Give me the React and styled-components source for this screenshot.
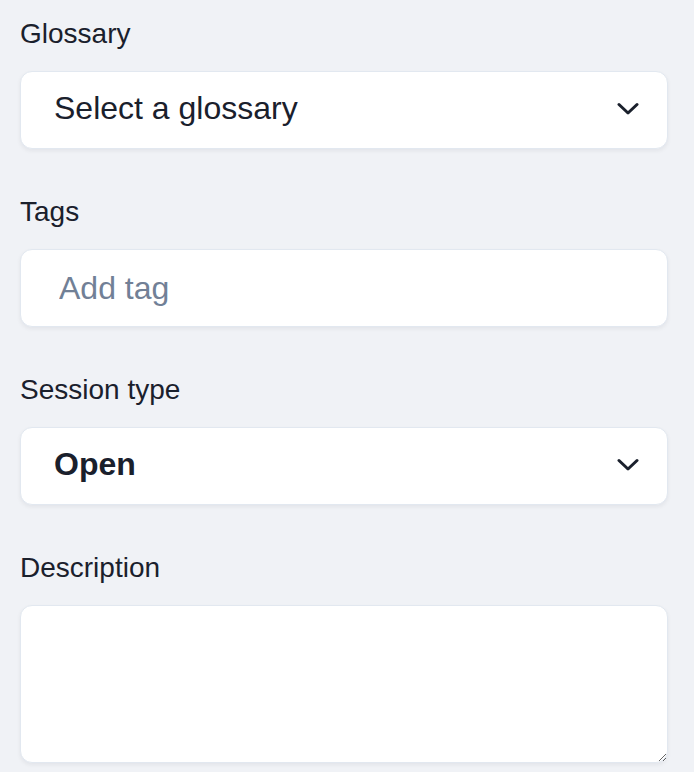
import React from "react";
import styled, { createGlobalStyle } from "styled-components";

const Global = createGlobalStyle`
  html, body { margin: 0; padding: 0; background: #f0f2f6; }
  body { font-family: "Liberation Sans", Arial, sans-serif; color: #1a202c; }
`;

const Page = styled.div`
  padding: 13px 0 0 20px;
  width: 648px;
`;

const Field = styled.div`
  display: flex;
  flex-direction: column;
  margin-bottom: 42px;
`;

const Label = styled.label`
  font-size: 28px;
  line-height: 42px;
  margin-bottom: 16px;
  color: #1a202c;
`;

const Box = styled.div`
  box-sizing: border-box;
  height: 78px;
  display: flex;
  align-items: center;
  justify-content: space-between;
  padding: 0 28px ${(p) => (p.$pb ?? 3)}px ${(p) => p.$pl || 33}px;
  background: #fff;
  border: 1px solid #e2e8f0;
  border-radius: 12px;
  box-shadow: 0 2px 4px rgba(15, 23, 42, 0.06);
`;

const Value = styled.span`
  font-size: 32px;
  font-weight: ${(p) => (p.$bold ? 700 : 400)};
  color: #1a202c;
`;

const Input = styled.input`
  border: none;
  outline: none;
  background: transparent;
  font-family: inherit;
  font-size: 32px;
  color: #1a202c;
  flex: 1;
  padding: 0;
  &::placeholder { color: #718096; }
`;

const TextArea = styled.textarea`
  box-sizing: border-box;
  height: 158px;
  width: 100%;
  resize: vertical;
  background: #fff;
  border: 1px solid #e2e8f0;
  border-radius: 12px;
  box-shadow: 0 2px 4px rgba(15, 23, 42, 0.06);
  font-family: inherit;
  font-size: 32px;
  padding: 16px 32px;
  outline: none;
`;

const Chevron = () => (
  <svg width="22" height="14" viewBox="0 0 22 14" fill="none">
    <path d="M2 2.5 L11 11 L20 2.5" stroke="#1a202c" strokeWidth="3" strokeLinecap="round" strokeLinejoin="round" />
  </svg>
);

export default function App() {
  return (
    <>
      <Global />
      <Page>
        <Field>
          <Label>Glossary</Label>
          <Box>
            <Value>Select a glossary</Value>
            <Chevron />
          </Box>
        </Field>
        <Field>
          <Label>Tags</Label>
          <Box $pl={38} $pb={0}>
            <Input placeholder="Add tag" />
          </Box>
        </Field>
        <Field>
          <Label>Session type</Label>
          <Box>
            <Value $bold>Open</Value>
            <Chevron />
          </Box>
        </Field>
        <Field>
          <Label>Description</Label>
          <TextArea />
        </Field>
      </Page>
    </>
  );
}
